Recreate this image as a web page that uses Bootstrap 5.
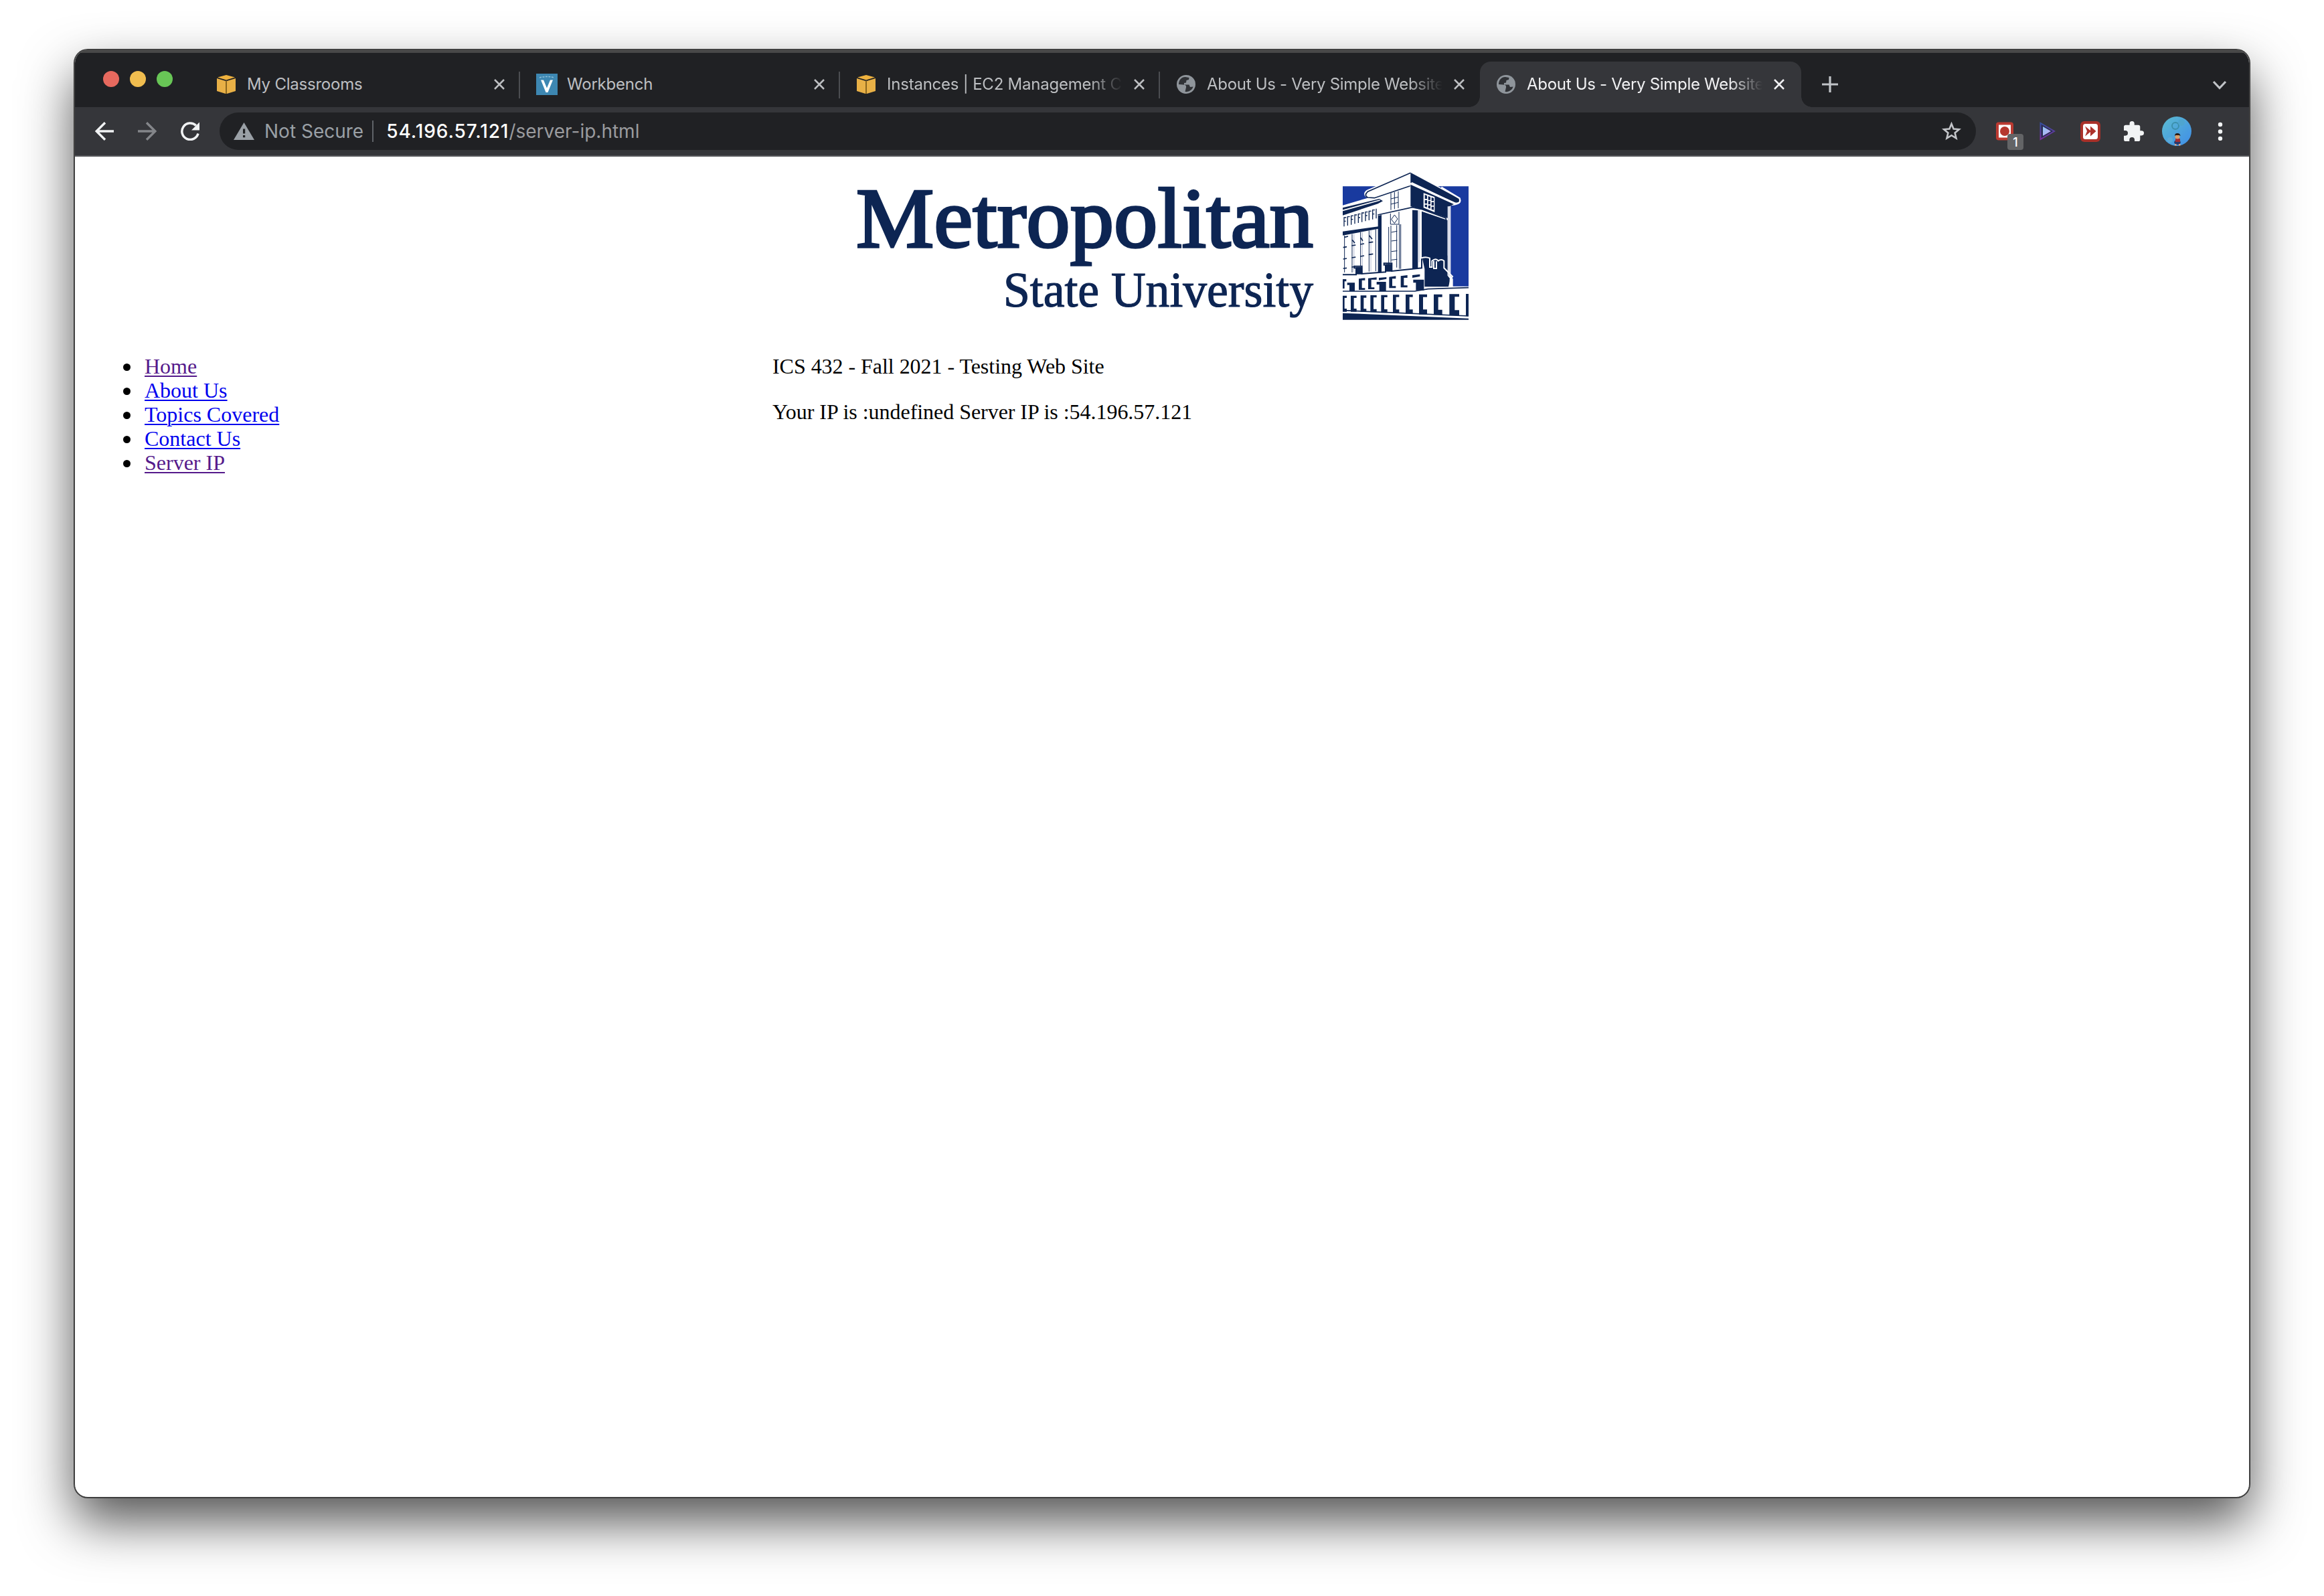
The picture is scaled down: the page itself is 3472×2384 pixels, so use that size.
<!DOCTYPE html>
<html lang="en">
<head>
<meta charset="utf-8">
<title>About Us - Very Simple Website</title>
<link href="https://cdn.jsdelivr.net/npm/bootstrap@5.3.0/dist/css/bootstrap.min.css" rel="stylesheet">
<script src="https://cdn.jsdelivr.net/npm/bootstrap@5.3.0/dist/js/bootstrap.bundle.min.js"></script>
<style>
body{background:#fff;padding:74px 111px 0;width:3472px;height:2384px;overflow:hidden;font-family:Inter,"Liberation Sans",sans-serif}
.win{width:3250px;height:2163px;border:1px solid #4a4a4a;border-radius:20px;background:#fff;overflow:hidden;
 box-shadow:0 0 0 1px #333,0 36px 78px rgba(0,0,0,.68)}
.strip{background:#202124;height:85px;border-top:4px solid #484848;padding-top:13px}
.lights{width:187px;padding:14px 0 0 42px;gap:16px}
.lights span{width:24px;height:24px;border-radius:50%}
.tab-item{width:478px;height:68px;padding-left:25px;position:relative;color:#bdbfc2}
.tab-item .fav{width:28px;height:28px;margin-right:17px}
.tab-item .fav-v{width:32px;height:32px;margin:0 14px 0 -1px}
.tab-title{width:354px;font-size:24px;line-height:32px;letter-spacing:-.22px;white-space:nowrap}
.tab-fade{-webkit-mask-image:linear-gradient(90deg,#000 302px,transparent 352px);mask-image:linear-gradient(90deg,#000 302px,transparent 352px)}
.tab-name{letter-spacing:-.3px}
.tab-x{width:16px;height:16px;margin-left:15px}
.tab-line:after{content:"";position:absolute;right:0;top:15px;width:2px;height:40px;background:#4b4d51}
.tab-on{background:#35363a;border-radius:16px 16px 0 0;width:480px;color:#f1f1f3}
.tab-on:before,.tab-on:after{content:"";position:absolute;bottom:0;width:16px;height:16px}
.tab-on:before{left:-16px;background:radial-gradient(circle at 0 0,#202124 15.5px,#35363a 16px)}
.tab-on:after{right:-16px;background:radial-gradient(circle at 100% 0,#202124 15.5px,#35363a 16px)}
.bar{background:#35363a;height:74px;border-bottom:2px solid #56575b;padding-left:30px}
.omni{width:2624px;height:56px;border-radius:28px;background:#202124;padding:0 22px 0 21px;font-size:28px;margin-left:30px}
.omni .muted{color:#9aa0a6}
.vline{width:2px;height:32px;background:#5f6368;margin:0 19px 0 13px}
.url{color:#fff;letter-spacing:.92px;font-weight:500}
.url span{color:#9a9b9e;letter-spacing:0;font-weight:400}
.page{padding:0 16px;font-family:"Liberation Serif",serif;font-size:32px;line-height:36px;color:#000}
.logo{display:block;margin:10px auto 0;height:246px;width:936px}
.links{width:1026px;padding-left:56px;margin:0;list-style:none}
.links li{display:flex;align-items:center}
.links li:before{content:"";width:11px;height:11px;border-radius:50%;background:#000;margin:2px 21px 0 0}
.links a{color:#0000ee;text-decoration:underline;text-decoration-thickness:2px;text-underline-offset:3px}
.links a.seen{color:#551a8b}
.info p{margin:0 0 32px;letter-spacing:-.04px}
</style>
</head>
<body>
<svg width="0" height="0" class="position-absolute">
<defs>
<symbol id="cube" viewBox="0 0 28 28"><path fill="#efb23e" d="M14 0 27 3.5 14 7.5 1 3.5z"/><path fill="#e8b046" d="M0 5 13 9V28L0 24z"/><path fill="#e8b046" d="M28 5 15 9V28L28 24z"/><path fill="#8a661f" d="M13 8.5h2V28h-2z"/></symbol>
<symbol id="ex" viewBox="0 0 16 16"><path d="M1 1 15 15M15 1 1 15" stroke="currentColor" stroke-width="2.5" fill="none"/></symbol>
<symbol id="globe" viewBox="0 0 28 28"><circle cx="14" cy="14" r="14" fill="#8f959b"/><path fill="#303236" d="M13 3C8 2.500 3 7 3 14L10 14.500C13 14.500 14.500 16 14 18.500L12.500 25C18 26 23.500 22 24.500 17.500L20 18 18.500 14.500H11V12L14 11.500 14.500 8 18 7 18.500 4z"/><path fill="#8f959b" d="M3 14.500 9 15 12 18 12.500 21 10.500 24.500C6 23 3 19 3 14.500z"/></symbol>
</defs>
</svg>
<div class="win">
 <div class="strip d-flex align-items-start">
  <div class="lights d-flex"><span style="background:#e6695e"></span><span style="background:#f0bd4f"></span><span style="background:#68c656"></span></div>
  <div class="tab-item tab-line d-flex align-items-center"><svg class="fav"><use href="#cube"/></svg><div class="tab-title">My Classrooms</div><svg class="tab-x"><use href="#ex"/></svg></div>
  <div class="tab-item tab-line d-flex align-items-center"><svg class="fav-v" viewBox="0 0 32 32"><path fill="#3d87b2" d="M0 0h32v32H0z"/><path d="M5 6Q16 3 27 6" stroke="#8fbfd8" stroke-width="1.500" fill="none" stroke-dasharray="3 1.500"/><path fill="#fff" d="M7 9.500H11L16 21.500 21 9.500H25L17.500 28H14.500z"/></svg><div class="tab-title">Workbench</div><svg class="tab-x"><use href="#ex"/></svg></div>
  <div class="tab-item tab-line d-flex align-items-center"><svg class="fav"><use href="#cube"/></svg><div class="tab-title tab-fade">Instances | EC2 Management C</div><svg class="tab-x"><use href="#ex"/></svg></div>
  <div class="tab-item d-flex align-items-center"><svg class="fav"><use href="#globe"/></svg><div class="tab-title tab-fade tab-name">About Us - Very Simple Website</div><svg class="tab-x"><use href="#ex"/></svg></div>
  <div class="tab-item tab-on d-flex align-items-center"><svg class="fav"><use href="#globe"/></svg><div class="tab-title tab-fade tab-name">About Us - Very Simple Website</div><svg class="tab-x"><use href="#ex"/></svg></div>
  <svg width="24" height="24" style="margin:22px 0 0 31px"><path d="M12 0V24M0 12H24" stroke="#c0c3c7" stroke-width="3.200"/></svg>
  <svg class="ms-auto" width="22" height="14" style="margin:28px 33px 0 0"><path d="M2 2 11 11.500 20 2" stroke="#c0c3c7" stroke-width="3.200" fill="none"/></svg>
 </div>
 <div class="bar d-flex align-items-center">
  <svg width="28" height="28" viewBox="0 0 28 28"><path d="M28 14H3M15 1.200 2.200 14 15 26.800" stroke="#f1f3f4" stroke-width="3.400" fill="none"/></svg>
  <svg width="28" height="28" viewBox="0 0 28 28" style="margin-left:36px"><path d="M0 14H25M13 1.200 25.800 14 13 26.800" stroke="#84868a" stroke-width="3.400" fill="none"/></svg>
  <svg width="28" height="28" viewBox="0 0 28 28" style="margin-left:36px"><path d="M26 17.500A12.300 12.300 0 1 1 22.800 5.500" stroke="#f1f3f4" stroke-width="3.500" fill="none"/><path d="M28 .5V12.500H16z" fill="#f1f3f4"/></svg>
  <div class="omni d-flex align-items-center">
   <svg width="31" height="26" viewBox="0 0 31 26"><path d="M15.500 0 31 26H0z" fill="#9aa0a6"/><path d="M14 9.500h3.200v7H14zM14 19h3.200v3.200H14z" fill="#202124"/></svg>
   <span class="muted" style="margin-left:15px">Not Secure</span><span class="vline"></span>
   <span class="url">54.196.57.121<span>/server-ip.html</span></span>
   <svg class="ms-auto" width="29" height="28" viewBox="0 0 29 28"><path d="M14.500 3 17.600 10.500 25.800 11.200 19.600 16.500 21.500 24.500 14.500 20.200 7.500 24.500 9.400 16.500 3.200 11.200 11.400 10.500z" stroke="#c3c5c9" stroke-width="2.600" fill="none"/></svg>
  </div>
  <div class="position-relative" style="margin-left:29px;width:42px;height:28px"><svg class="d-block" width="28" height="28"><rect x="3" y="2.500" width="22" height="23" fill="#fff" stroke="#bb3a31" stroke-width="4" rx="2"/><circle cx="14" cy="14" r="7" fill="#b5372e"/></svg><span class="position-absolute text-white text-center" style="left:18px;top:18px;width:24px;height:24px;border-radius:4px;background:#636466;font:500 18px/25px Inter,sans-serif">1</span></div>
  <svg width="24" height="30" viewBox="0 0 24 30" style="margin-left:24px"><defs><linearGradient id="pg" x2="0" y2="1"><stop stop-color="#35509e"/><stop offset="1" stop-color="#7b2e9b"/></linearGradient><linearGradient id="pi" x2="1" y2="1"><stop stop-color="#8dc6f4"/><stop offset="1" stop-color="#c9a9f2"/></linearGradient></defs><path d="M1.500 3V27L22 15z" stroke="url(#pg)" stroke-width="2" fill="#292b50"/><path d="M5 8V22L17 15z" fill="url(#pi)"/></svg>
  <svg width="32" height="32" viewBox="0 0 32 32" style="margin-left:36px"><rect x="1" y="1" width="30" height="31" rx="6" fill="#a93129"/><rect x="5" y="5" width="22" height="23" rx="3.500" fill="#fff"/><path d="M8 8.500 16 15 16 8.500 24.500 16 16 23.500 16 17 8 23.500 11 16z" fill="#ad322b"/></svg>
  <svg width="30" height="30" viewBox="2 1 21 21" style="margin-left:34px"><path fill="#f1f3f4" d="M20.500 11H19V7a2 2 0 0 0-2-2h-4V3.500a2.500 2.500 0 0 0-5 0V5H4a2 2 0 0 0-2 2v3.800h1.500a2.700 2.700 0 0 1 0 5.400H2V20a2 2 0 0 0 2 2h3.800v-1.500a2.700 2.700 0 0 1 5.400 0V22H17a2 2 0 0 0 2-2v-4h1.500a2.500 2.500 0 0 0 0-5z"/></svg>
  <svg width="44" height="44" viewBox="0 0 44 44" style="margin-left:27px"><defs><linearGradient id="av" x2="1" y2="1"><stop stop-color="#5cbcd0"/><stop offset="1" stop-color="#3f8de8"/></linearGradient></defs><circle cx="22" cy="22" r="22" fill="url(#av)"/><circle cx="20" cy="14" r="5" fill="none" stroke="#3b8fac" stroke-width="2"/><circle cx="29" cy="9" r="5" fill="#4fa5cf"/><circle cx="12" cy="35" r="4" fill="#5cabd8"/><path d="M19 36h8l1 3-2 3h-6l-2-3z" fill="#283a6c"/><path d="M20 33h7v5h-7z" fill="#a12e33"/><circle cx="23" cy="30" r="3.500" fill="#d9a06d"/><path d="M19 29q0-4 4-4t4.500 4l-2-1h-5z" fill="#2b1a12"/><path d="M19 41h2.500v2.500h-2.500zM25 41h2.500v2.500h-2.500z" fill="#d9a58d"/></svg>
  <svg width="8" height="28" style="margin-left:39px"><circle cx="4" cy="4" r="3.200" fill="#f1f3f4"/><circle cx="4" cy="14.500" r="3.200" fill="#f1f3f4"/><circle cx="4" cy="25" r="3.200" fill="#f1f3f4"/></svg>
 </div>
 <main class="page">
  <svg class="logo" viewBox="1268 244 936 246">
   <g fill="#0d2553" stroke="#0d2553" font-family="'Liberation Serif',serif">
    <text x="1279" y="369" font-size="126" stroke-width="3.500" textLength="683" lengthAdjust="spacingAndGlyphs">Metropolitan</text>
    <text x="1499" y="458" font-size="73" stroke-width="1.200" textLength="463" lengthAdjust="spacingAndGlyphs">State University</text>
   </g>
   <g transform="translate(1990 245) scale(.33333)">
    <path fill="#193a9f" d="M48 100H612V548H48z"/>
    <path fill="#fff" d="M48 185 160 152C140 145 138 125 160 115L352 34 570 150C588 170 570 185 532 186V500L542 515V550H612V700H48z"/>
    <path fill="#0d2553" d="M352 38 575 158Q578 172 556 174L352 84z"/>
    <path fill="none" stroke="#0d2553" stroke-width="5" d="M352 40 160 124Q142 140 160 150L190 152 350 98"/>
    <path fill="none" stroke="#fff" stroke-width="7" d="M356 84 548 176Q580 180 572 154L490 104"/>
    <path fill="#0d2553" d="M352 92 546 180 522 192V244L400 202 352 190z"/>
    <path fill="#0d2553" d="M48 196 212 156 228 166 206 178 48 230z"/>
    <path fill="none" stroke="#fff" stroke-width="5" d="M48 208 215 162"/>
    <path fill="none" stroke="#0d2553" stroke-width="5" d="M205 228 360 194 400 202 510 242 512 256"/>
    <path fill="#0d2553" d="M360 206 385 208V468L360 472zM402 212 518 252V490L500 430 402 420z"/>
    <path fill="#0d2553" d="M402 410H518V500L530 516 522 550H415V470z"/>
    <path fill="#d8dce8" d="M518 190H530V500H518zM386 206H394V440H386z"/>
    <path fill="#fff" d="M410 130 460 148V216L410 196z"/>
    <path fill="#0d2553" d="M416 138l10 4v14h-10zM431 144l10 4v13h-10zM446 149l10 4v13h-10zM416 162h10v15h-10zM431 166h10v15h-10zM446 171h10v15h-10zM416 182h10v12l-10-3zM431 186h10v14l-10-3zM446 191h10v15l-10-3z"/>
    <path fill="none" stroke="#0d2553" stroke-width="4" d="M54 238V280M70 234V276M86 230V272M102 226V268M118 222V264M134 217V260M150 213V256M166 209V252M182 204V248M198 200V244M54 240h10M70 236h10M86 232h10M102 228h10M118 224h10M134 219h10M150 215h10M166 211h10M182 206h10M54 256h8M86 248h8M118 240h8M150 231h8M182 224h8"/>
    <path fill="#0d2553" d="M48 302 208 280V290L48 320z"/>
    <path fill="#0d2553" d="M206 232 222 228V484L206 486z"/>
    <path fill="none" stroke="#0d2553" stroke-width="3" d="M56 320V486M90 314V486M128 306V460M166 298V482M196 292V480"/>
    <path fill="none" stroke="#c3cadb" stroke-width="4" d="M98 314V484M136 306V460M174 298V482"/>
    <path fill="none" stroke="#0d2553" stroke-width="5" d="M56 328l16-4M90 340l12 14M128 330l10 14M166 320l14 16M50 374l16-3M88 366l18-3M126 360l18-3M164 352l20-3M50 426l16-3M88 420l18-3M126 414l18-3M164 406l20-3M50 468l16-2M88 462l14-2"/>
    <path fill="none" stroke="#0d2553" stroke-width="3" d="M264 130V206M280 126V202M297 122V198M264 156l33-8M264 180l33-8M262 222V270H300V214M280 228l-14 20 14 18 14-20zM254 282V470M264 276V440M290 274V464M302 270V470M308 270V470M266 306l26-5M266 345l26-3M266 392l26-3M266 430l26-3"/>
    <path fill="none" stroke="#fff" stroke-width="6" d="M396 470V424Q416 412 438 422V462H448V434Q466 420 476 434 490 424 502 434V466L540 504 530 516V550M456 434V468H468V436"/>
    <path fill="none" stroke="#0d2553" stroke-width="6" d="M48 496H108V466H100V458H134V492L240 484V452H233V445H268V480L402 466V424"/>
    <path fill="#0d2553" d="M108 462h28v32h-28zM242 448h28v34h-28z"/>
    <path fill="#0d2553" d="M48 516h16v10H56v32h-8zM120 514l28-3v10h-14v35h14v8h-28zM162 512l38-4v10h-24v35h14v8h-28zM210 510l34-3v8l-34 6zM256 506l30-4v12h-16v33h16v9h-30zM308 502l30-4v12h-16v34h16v9h-30zM360 498l34-4v10l-34 6z"/>
    <path fill="#0d2553" d="M68 532h34v38H78v-28H68zM200 528h42v42h-30v-30h-12zM364 518h48v48h-36v-34h-12z"/>
    <path fill="none" stroke="#0d2553" stroke-width="5" d="M48 570H370L430 560 612 554"/>
    <path fill="#0d2553" d="M48 590h18v10H56v48h10v14H48zM84 590h26v10H98v48h12v14H84zM128 589h26v10h-12v50h12v14h-26zM172 588h28v10h-14v52h14v14h-28zM220 587h28v10h-14v54h14v16h-28zM273 586h28v10h-14v56h14v17h-28zM330 585h32v11h-15v56h15v19h-32zM390 584h36v12h-18v56h18v22h-36zM456 584h38v12h-18v57h18v23h-38zM526 583h44v12h-20v60h20v24h-44zM600 582h12v100h-12z"/>
    <path fill="none" stroke="#0d2553" stroke-width="5" d="M48 656 612 681"/>
    <path fill="#0d2553" d="M48 668 612 692V698H48z"/>
   </g>
  </svg>
  <div class="d-flex" style="margin-top:39px">
   <ul class="links"><li><a class="seen" href="#">Home</a></li><li><a href="#">About Us</a></li><li><a href="#">Topics Covered</a></li><li><a href="#">Contact Us</a></li><li><a class="seen" href="#">Server IP</a></li></ul>
   <div class="info"><p>ICS 432 - Fall 2021 - Testing Web Site</p><p>Your IP is :undefined Server IP is :54.196.57.121</p></div>
  </div>
 </main>
</div>
</body>
</html>
